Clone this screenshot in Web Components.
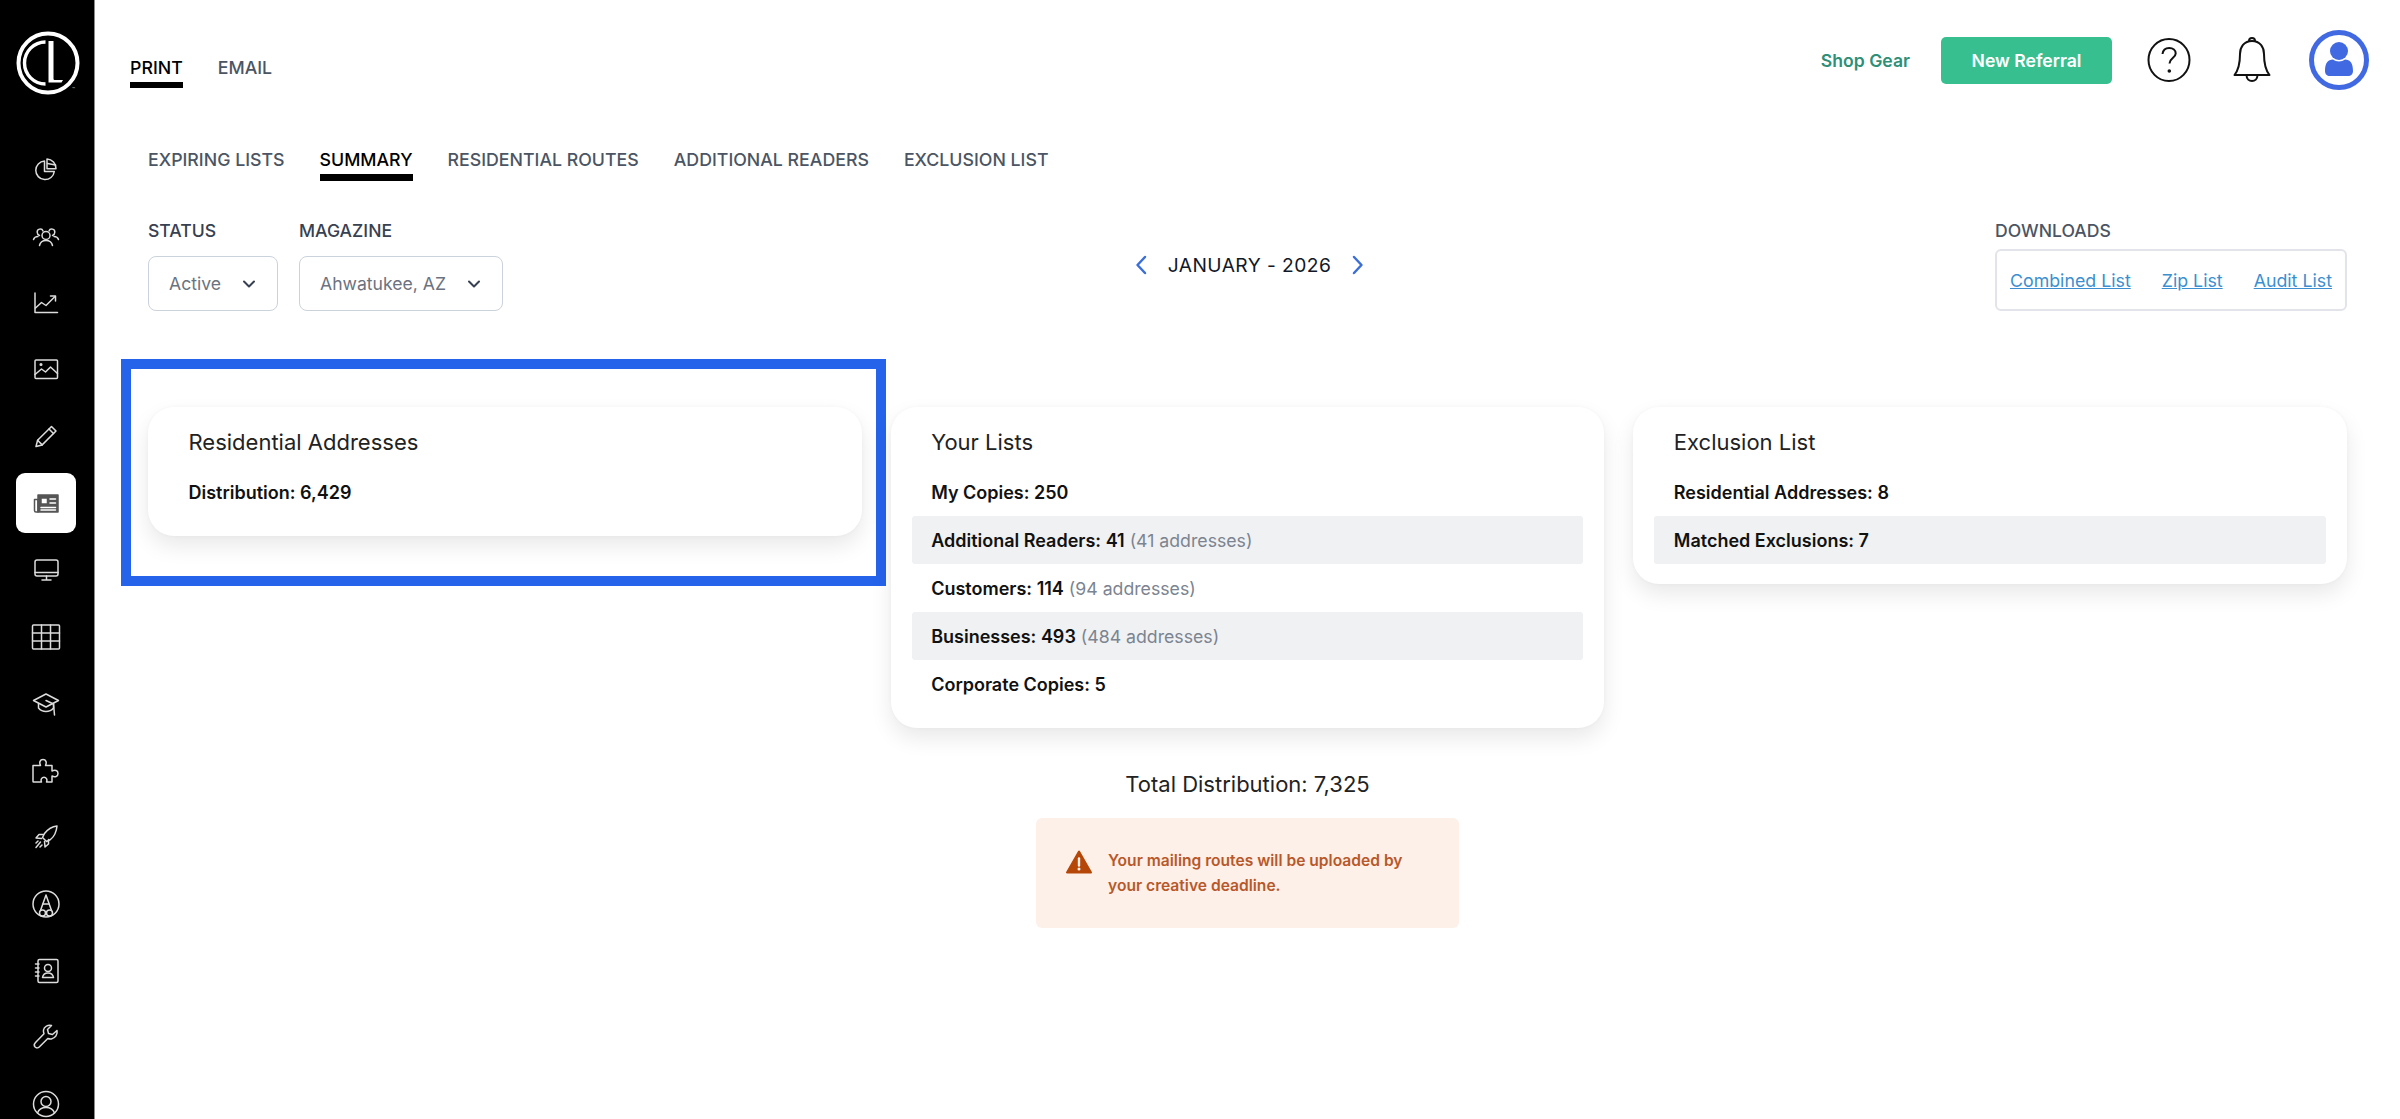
<!DOCTYPE html>
<html lang="en">
<head>
<meta charset="utf-8">
<title>Summary</title>
<style>
  html, body { margin: 0; height: 100%; background: #fff; overflow: hidden; font-family: Inter, "Liberation Sans", sans-serif; }
</style>
</head>
<body>
<app-shell>
  <side-nav slot="nav"></side-nav>
  <top-bar></top-bar>
  <tab-strip class="sub" items="EXPIRING LISTS|SUMMARY|RESIDENTIAL ROUTES|ADDITIONAL READERS|EXCLUSION LIST" active="SUMMARY"></tab-strip>
  <filter-bar>
    <filter-select slot="filters" label="STATUS" value="Active" width="130"></filter-select>
    <filter-select slot="filters" label="MAGAZINE" value="Ahwatukee, AZ" width="204"></filter-select>
    <month-picker slot="month" value="JANUARY - 2026"></month-picker>
    <download-links slot="downloads"></download-links>
  </filter-bar>
  <card-grid>
    <summary-card heading="Residential Addresses" highlighted>
      <stat-row label="Distribution: 6,429"></stat-row>
    </summary-card>
    <summary-card heading="Your Lists">
      <stat-row label="My Copies: 250"></stat-row>
      <stat-row striped label="Additional Readers: 41" note="(41 addresses)"></stat-row>
      <stat-row label="Customers: 114" note="(94 addresses)"></stat-row>
      <stat-row striped label="Businesses: 493" note="(484 addresses)"></stat-row>
      <stat-row label="Corporate Copies: 5"></stat-row>
    </summary-card>
    <summary-card heading="Exclusion List">
      <stat-row label="Residential Addresses: 8"></stat-row>
      <stat-row striped label="Matched Exclusions: 7"></stat-row>
    </summary-card>
  </card-grid>
  <total-panel total="Total Distribution: 7,325">Your mailing routes will be uploaded by your creative deadline.</total-panel>
</app-shell>

<script>
// --- Sidebar icon paths (30x30 box) ---
const NAV_ICONS = {
  pie: '<path d="M13.500 7a9.300 9.300 0 1 0 9.800 10.500h-9.800z"/><path d="M16 5a9.500 9.500 0 0 1 9 9.800h-9z"/><path d="M16.500 9.500l8 1.500"/>',
  people: '<circle cx="15" cy="14.500" r="4"/><path d="M8.500 24.500c.7-3.400 3.200-5 6.500-5s5.800 1.600 6.500 5"/><path d="M8.500 14.500c-1.500-.6-2.300-1.800-2.300-3.200a3 3 0 0 1 5.800-1.300"/><path d="M21.500 14.500c1.500-.6 2.300-1.800 2.300-3.200a3 3 0 0 0-5.800-1.300"/><path d="M2.500 18.500c.6-1.800 2.200-3 4.500-3"/><path d="M27.500 18.500c-.6-1.800-2.200-3-4.500-3"/>',
  chart: '<path d="M4 5v19.500h22.500"/><path d="M4.500 20l6-5.500 4.500 3 9-9"/><path d="M19.500 8h5v5"/>',
  image: '<rect x="4" y="6" width="22.500" height="18.500" rx="1"/><path d="M4 20.500l6.500-5.500 4 3 5-5 7 6.500"/><circle cx="10" cy="10.500" r=".8"/>',
  pencil: '<path d="M5 25.500l1.600-6.200L20.500 5.500l4.500 4.500L11.200 23.900z"/><path d="M6.600 19.300l4.600 4.600"/><path d="M18 8l4.500 4.500"/>',
  paper: '<path d="M7 7h20v17H7z" fill="#555"/><path d="M3.500 11.500H7V24H5A1.500 1.500 0 0 1 3.500 22.500z"/><rect x="10" y="10" width="6.500" height="6" fill="#fff"/><path d="M19 11h5.500M19 15h5.500M10 19.500h14.500M10 22h14.500" stroke="#fff"/>',
  monitor: '<rect x="4" y="5" width="23" height="16" rx="2"/><path d="M4 17.500h23"/><path d="M15.500 21v3.500M11 25h9"/>',
  grid: '<rect x="1.500" y="3" width="27" height="24" rx="1"/><path d="M10.500 3v24M19.500 3v24M1.500 11h27M1.500 19h27"/>',
  cap: '<path d="M15 6L2.500 12.500 15 19l12.500-6.500z"/><path d="M7.500 15.500V20c2 2.500 4.500 3.500 7.500 3.500s5.500-1 7.500-3.500v-4.500"/><path d="M15 12.500l7.500 3.500 1 11"/>',
  puzzle: '<path d="M2 10.500h7.500c-1.500-3-.5-6 2.500-6s4 3 2.500 6h6.500v5.500c3-1.500 6-.5 6 2.500s-3 4-6 2.500v6h-5.500c1.200-2.500-.5-4.800-2.500-4.800s-3.700 2.300-2.500 4.800H2.500c-.3 0-.5-.2-.5-.5z"/>',
  rocket: '<path d="M26 4c-5 .5-9 3-12.500 7.500l-2 4 4 4 4-2C24 14 25.500 9 26 4z"/><path d="M12.500 12.500H8L5 16l5.500 .5"/><path d="M17.500 17.500V22l-3.500 3-.5-5.500"/><path d="M9.500 20l-4.500 5.500M7 19l-2 2M11 23l-2 2"/>',
  author: '<circle cx="15" cy="15" r="13"/><path d="M9.500 21.500L15 6l5.500 15.500"/><path d="M12 15h6"/><circle cx="11.500" cy="24" r="3"/><circle cx="18.500" cy="24" r="3"/>',
  contact: '<rect x="7" y="3.500" width="20" height="23" rx="1.500"/><circle cx="17" cy="12" r="3.500"/><path d="M11.500 21.500c.5-3 2.800-4.500 5.500-4.500s5 1.500 5.500 4.500z"/><path d="M4.500 8H8M4.500 12H8M4.500 16H8M4.500 20H8"/>',
  wrench: '<path d="M26 8.500l-4.500 4-4-1-1-4 4-4c-3.500-1-7.500 1-8 4.500-.2 1.500 0 2.700.5 3.800L4.500 20.500c-1.500 1.500-1.500 3.300-.4 4.500 1.200 1.200 3 1.200 4.400-.2l8.300-8.300c1 .4 2.300.6 3.600.4 3.800-.6 6.500-4.500 5.600-8.400z"/>',
  user: '<circle cx="15" cy="15" r="12.500"/><circle cx="15" cy="12.500" r="5"/><path d="M6.500 24c1.300-3.500 4.500-5.500 8.500-5.500s7.200 2 8.500 5.500"/>'
};
const NAV_ORDER = ['pie','people','chart','image','pencil','paper','monitor','grid','cap','puzzle','rocket','author','contact','wrench','user'];

// --- Shell ---
class AppShell extends HTMLElement {
  constructor() {
    super();
    this.attachShadow({ mode: 'open' }).innerHTML = `
      <style>
        :host { display: flex; height: 1119px; overflow: hidden; background: #fff; color: #111; }
        main { flex: 1; min-width: 0; display: flex; flex-direction: column; }
      </style>
      <slot name="nav"></slot>
      <main><slot></slot></main>`;
  }
}

class SideNav extends HTMLElement {
  constructor() {
    super();
    const items = NAV_ORDER.map(name => {
      const active = name === 'paper';
      return `<a class="${active ? 'active' : ''}"><svg viewBox="0 0 30 30" width="30" height="30">${NAV_ICONS[name]}</svg></a>`;
    }).join('');
    this.attachShadow({ mode: 'open' }).innerHTML = `
      <style>
        :host { display: block; width: 94px; flex: none; height: 1119px; overflow: hidden; background: #000; border-right: 1px solid #8a8a8a; box-sizing: content-box; }
        .logo { display: block; margin: 30px 0 0 14.500px; overflow: visible; }
        nav { display: flex; flex-direction: column; align-items: center; margin-top: 43px; padding-right: 2px; }
        a { width: 60px; height: 60px; flex: none; margin-bottom: 6.800px; border-radius: 9px; display: flex; align-items: center; justify-content: center; }
        a svg { fill: none; stroke: #dcdcdc; stroke-width: 1.500; stroke-linecap: round; stroke-linejoin: round; }
        a.active { background: #fff; }
        a.active svg { stroke: #555; }
      </style>
      <svg class="logo" width="66" height="66" viewBox="0 0 66 66" fill="none" stroke="#fff">
        <circle cx="33" cy="33" r="29.500" stroke-width="4"/>
        <path d="M30.500 12a21 21 0 1 0 0 42" stroke-width="3.400"/>
        <path d="M33.500 11h5v37.500c0 1 .5 1.500 1.500 1.500h8l-1.500 2.500H33.500z" fill="#fff" stroke="none"/>
        <text x="57" y="61" font-size="5" fill="#bbb" stroke="none" font-family="Inter, sans-serif">™</text>
      </svg>
      <nav>${items}</nav>`;
  }
}

class TopBar extends HTMLElement {
  constructor() {
    super();
    this.attachShadow({ mode: 'open' }).innerHTML = `
      <style>
        :host { display: flex; height: 120px; padding: 0 31px 0 35px; align-items: center; box-sizing: border-box; }
        tab-strip { align-self: flex-start; margin-top: 56px; }
        .actions { margin-left: auto; display: flex; align-items: center; }
        .shop { font-size: 17.600px; font-weight: 600; color: #2f8f78; margin-right: 31px; }
        .refer { width: 171px; height: 47px; border-radius: 5px; background: #37bf90; color: #fff; font-size: 17.600px; font-weight: 600; display: flex; align-items: center; justify-content: center; margin-right: 35px; }
        .help { margin-right: 42px; display: block; }
        .bell { margin-right: 38px; display: block; }
        .avatar { display: block; }
      </style>
      <tab-strip items="PRINT|EMAIL" active="PRINT" gap="35"></tab-strip>
      <div class="actions">
        <span class="shop">Shop Gear</span>
        <span class="refer">New Referral</span>
        <svg class="help" width="44" height="48" viewBox="0 0 44 48" fill="none" stroke="#111" stroke-width="2">
          <ellipse cx="22" cy="24" rx="20.500" ry="21"/>
          <path d="M15.500 18c.5-4 3.200-6 6.700-6 3.800 0 6.500 2.400 6.500 5.500 0 4.500-6.200 4.800-6.200 10"/>
          <circle cx="22.300" cy="35" r="1.800" fill="#111" stroke="none"/>
        </svg>
        <svg class="bell" width="38" height="48" viewBox="0 0 38 48" fill="none" stroke="#111" stroke-width="2" stroke-linejoin="round">
          <path d="M19 5c-8 0-12 6-12 13 0 10-1.500 16-5.500 21h35c-4-5-5.500-11-5.500-21 0-7-4-13-12-13z"/>
          <path d="M16 5c0-4 6-4 6 0"/>
          <path d="M13.500 39c0 8 11 8 11 0"/>
        </svg>
        <svg class="avatar" width="60" height="60" viewBox="0 0 60 60">
          <circle cx="30" cy="30" r="27.500" fill="#fff" stroke="#4169e1" stroke-width="5"/>
          <circle cx="30" cy="21" r="9" fill="#4169e1"/>
          <path d="M16 41c0-8 3-11.500 8-11.500 3 2.500 9 2.500 12 0 5 0 8 3.500 8 11.500 0 3-2 5-5 5H21c-3 0-5-2-5-5z" fill="#4169e1"/>
        </svg>
      </div>`;
  }
}

// --- Tabs ---
class TabStrip extends HTMLElement {
  constructor() {
    super();
    const items = (this.getAttribute('items') || '').split('|');
    const active = this.getAttribute('active');
    const gap = this.getAttribute('gap') || 35;
    this.attachShadow({ mode: 'open' }).innerHTML = `
      <style>
        :host { display: flex; gap: ${gap}px; }
        :host(.sub) { margin: 28px 0 0 53px; }
        span { font-size: 17.750px; font-weight: 500; line-height: 24px; color: #4b5563; padding-bottom: 2px; border-bottom: 6px solid transparent; white-space: nowrap; }
        :host(.sub) span { border-bottom-width: 7px; }
        span.on { color: #000; border-bottom-color: #000; }
      </style>
      ${items.map(t => `<span class="${t === active ? 'on' : ''}">${t}</span>`).join('')}`;
  }
}

// --- Filter row ---
class FilterBar extends HTMLElement {
  constructor() {
    super();
    this.attachShadow({ mode: 'open' }).innerHTML = `
      <style>
        :host { display: grid; grid-template-columns: 1fr auto 1fr; margin: 38px 53px 0; align-items: start; }
        .left { display: flex; gap: 21px; }
        .right { display: flex; justify-content: flex-end; }
      </style>
      <div class="left"><slot name="filters"></slot></div>
      <slot name="month"></slot>
      <div class="right"><slot name="downloads"></slot></div>`;
  }
}

class FilterSelect extends HTMLElement {
  constructor() {
    super();
    const w = this.getAttribute('width');
    this.attachShadow({ mode: 'open' }).innerHTML = `
      <style>
        :host { display: block; }
        label { display: block; font-size: 17.600px; font-weight: 500; line-height: 24px; color: #374151; margin-bottom: 13px; }
        .box { width: ${w}px; height: 55px; box-sizing: border-box; border: 1.500px solid #cbd2dc; border-radius: 8px; padding: 0 22px 0 20px; display: flex; align-items: center; justify-content: space-between; font-size: 17.600px; color: #6b7280; }
        svg { fill: none; stroke: #374151; stroke-width: 2; stroke-linecap: round; stroke-linejoin: round; }
      </style>
      <label>${this.getAttribute('label')}</label>
      <div class="box"><span>${this.getAttribute('value')}</span>
        <svg width="12" height="8" viewBox="0 0 12 8"><path d="M1 1.500l5 5 5-5"/></svg></div>`;
  }
}

class MonthPicker extends HTMLElement {
  constructor() {
    super();
    this.attachShadow({ mode: 'open' }).innerHTML = `
      <style>
        :host { display: flex; align-items: center; gap: 20.500px; height: 34px; margin: 29px 0 0 4px; }
        span { font-size: 19.200px; font-weight: 400; color: #111827; letter-spacing: .45px; white-space: nowrap; }
        svg { fill: none; stroke: #3b6fd8; stroke-width: 2.500; stroke-linecap: round; stroke-linejoin: round; }
      </style>
      <svg width="12" height="20" viewBox="0 0 12 20"><path d="M10 2L2.500 10l7.500 8"/></svg>
      <span>${this.getAttribute('value')}</span>
      <svg width="12" height="20" viewBox="0 0 12 20"><path d="M2 2l7.500 8-7.500 8"/></svg>`;
  }
}

class DownloadLinks extends HTMLElement {
  constructor() {
    super();
    this.attachShadow({ mode: 'open' }).innerHTML = `
      <style>
        :host { display: block; width: 352px; }
        label { display: block; font-size: 17.600px; font-weight: 500; line-height: 24px; color: #4b5563; margin-bottom: 6px; }
        .box { height: 62px; box-sizing: border-box; border: 2px solid #e2e4ea; border-radius: 6px; padding: 0 13px; display: flex; align-items: center; justify-content: space-between; }
        a { font-size: 17.800px; color: #3b8fd0; text-decoration: underline; white-space: nowrap; }
      </style>
      <label>DOWNLOADS</label>
      <div class="box"><a>Combined List</a><a>Zip List</a><a>Audit List</a></div>`;
  }
}

// --- Cards ---
class CardGrid extends HTMLElement {
  constructor() {
    super();
    this.attachShadow({ mode: 'open' }).innerHTML = `
      <style>
        :host { display: grid; grid-template-columns: repeat(3, 1fr); gap: 29px; margin: 96px 53px 0; align-items: start; }
      </style>
      <slot></slot>`;
  }
}

class SummaryCard extends HTMLElement {
  constructor() {
    super();
    this.attachShadow({ mode: 'open' }).innerHTML = `
      <style>
        :host { display: block; position: relative; background: #fff; border-radius: 26px; padding: 20px 21px; box-shadow: 0 0 4px rgba(0,0,0,.03), 0 10px 22px rgba(0,0,0,.09); }
        h3 { margin: 0 0 11px; padding-left: 19.500px; font-size: 22px; font-weight: 400; line-height: 30px; color: #222; }
        .mark { display: none; position: absolute; top: -48px; left: -27px; right: -24px; bottom: -50px; border: 10px solid #2563eb; pointer-events: none; }
        :host([highlighted]) .mark { display: block; }
      </style>
      <h3>${this.getAttribute('heading')}</h3>
      <slot></slot>
      <div class="mark"></div>`;
  }
}

class StatRow extends HTMLElement {
  constructor() {
    super();
    const note = this.getAttribute('note');
    this.attachShadow({ mode: 'open' }).innerHTML = `
      <style>
        :host { display: flex; align-items: center; height: 48px; padding-left: 19.500px; font-size: 18px; border-radius: 3px; }
        :host([striped]) { background: #f0f1f3; }
        b { font-weight: 600; color: #111; }
        i { font-style: normal; font-size: 17.700px; color: #7b8490; margin-left: 5px; }
      </style>
      <b>${this.getAttribute('label')}</b>${note ? `<i>${note}</i>` : ''}`;
  }
}

class TotalPanel extends HTMLElement {
  constructor() {
    super();
    this.attachShadow({ mode: 'open' }).innerHTML = `
      <style>
        :host { display: flex; flex-direction: column; align-items: center; margin-top: 41px; }
        .total { font-size: 22px; line-height: 30px; color: #222; margin-bottom: 19px; }
        .alert { width: 423px; height: 110px; box-sizing: border-box; background: #fcf0e8; border-radius: 6px; padding: 0 40px 0 30px; display: flex; align-items: center; gap: 16px; }
        svg { flex: none; margin-top: -22px; }
        p { margin: 0; font-size: 15.600px; font-weight: 600; line-height: 25px; color: #b8582a; }
      </style>
      <div class="total">${this.getAttribute('total')}</div>
      <div class="alert">
        <svg width="26" height="24" viewBox="0 0 26 24">
          <path d="M13 1.500L1 22.500h24z" fill="#b54708" stroke="#b54708" stroke-width="2" stroke-linejoin="round"/>
          <path d="M13 8.500v7" stroke="#fcf0e8" stroke-width="2.400" stroke-linecap="round"/>
          <circle cx="13" cy="19" r="1.500" fill="#fcf0e8"/>
        </svg>
        <p><slot></slot></p>
      </div>`;
  }
}

customElements.define('app-shell', AppShell);
customElements.define('side-nav', SideNav);
customElements.define('top-bar', TopBar);
customElements.define('tab-strip', TabStrip);
customElements.define('filter-bar', FilterBar);
customElements.define('filter-select', FilterSelect);
customElements.define('month-picker', MonthPicker);
customElements.define('download-links', DownloadLinks);
customElements.define('card-grid', CardGrid);
customElements.define('summary-card', SummaryCard);
customElements.define('stat-row', StatRow);
customElements.define('total-panel', TotalPanel);
</script>
</body>
</html>
